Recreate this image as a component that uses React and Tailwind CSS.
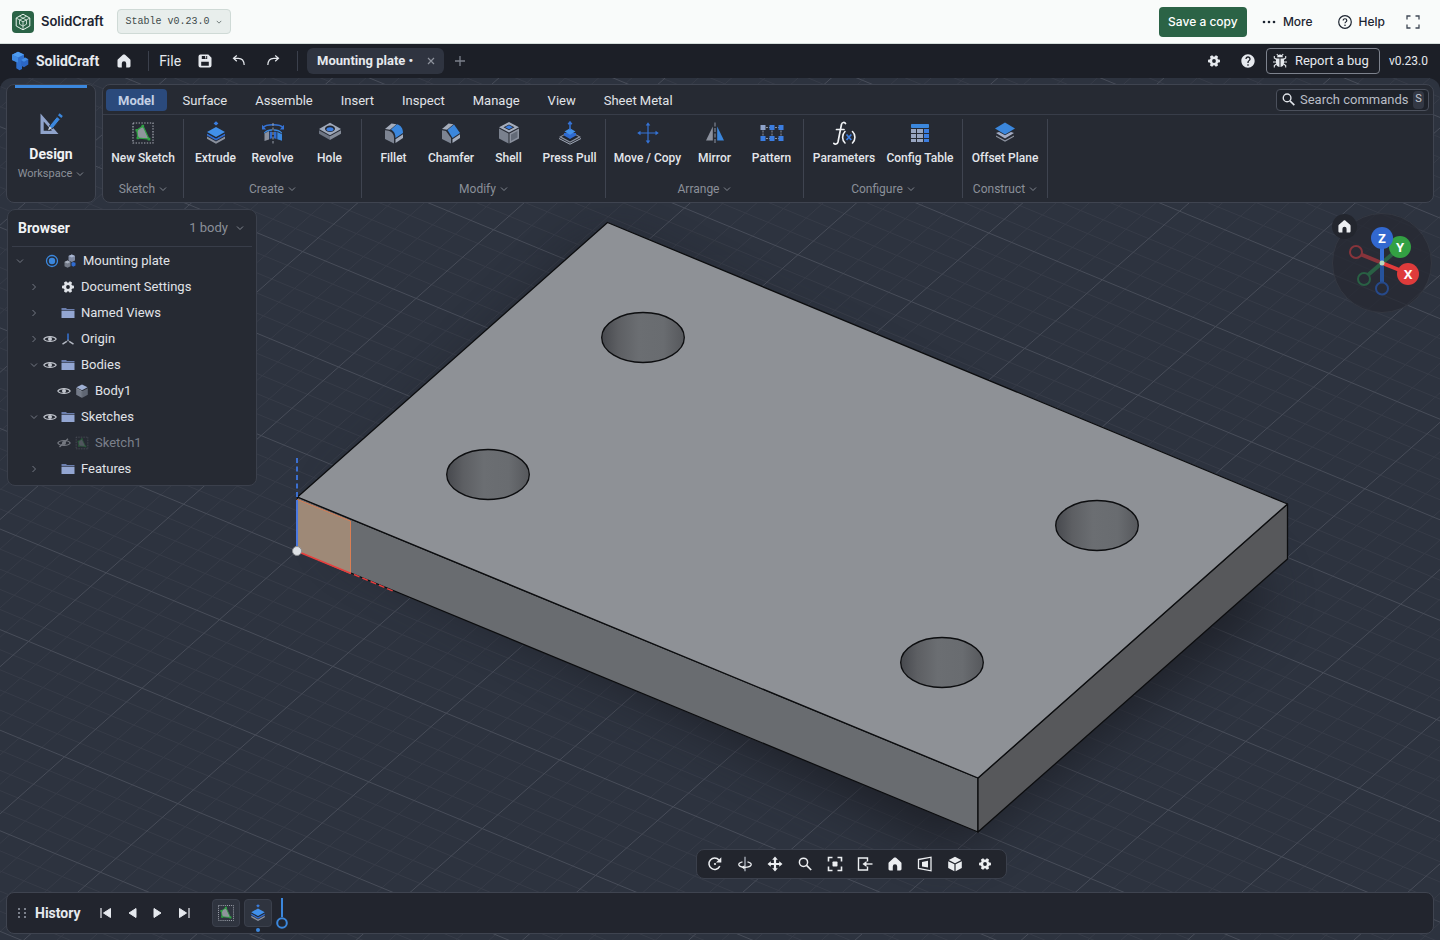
import React from "react";
import { MdHelp } from "react-icons/md";

/* ---------- icons ---------- */

function Svg({ size = 16, box = 16, className = "", children }) {
  return (
    <svg
      width={size}
      height={size}
      viewBox={`0 0 ${box} ${box}`}
      fill="none"
      aria-hidden="true"
      className={`shrink-0 ${className}`}
    >
      {children}
    </svg>
  );
}

const HomeIcon = ({ size = 16 }) => (
  <Svg size={size}>
    <path
      d="M8 1.4c-.4 0-.8.2-1.1.4L2 6.2c-.4.3-.5.7-.5 1.2V13c0 .8.6 1.4 1.4 1.4h2.9V10.5a2.2 2.2 0 0 1 4.4 0v3.9h2.9c.8 0 1.4-.6 1.4-1.4V7.4c0-.5-.2-.9-.5-1.2L9.1 1.8C8.8 1.6 8.4 1.4 8 1.4Z"
      fill="currentColor"
    />
  </Svg>
);

const GearIcon = ({ size = 16 }) => (
  <Svg size={size}>
    <g fill="currentColor">
      {[0, 60, 120].map((a) => (
        <rect key={a} x="6.5" y="2" width="3" height="12" rx="0.8" transform={`rotate(${a + 30} 8 8)`} />
      ))}
    </g>
    <circle cx="8" cy="8" r="3.1" stroke="currentColor" strokeWidth="2.6" />
    <circle cx="8" cy="8" r="1.9" fill="#1f232b" />
  </Svg>
);

const SaveIcon = () => (
  <Svg>
    <path
      fillRule="evenodd"
      d="M3.5 1.5h7.8l3.2 3.2v7.8a2 2 0 0 1-2 2h-9a2 2 0 0 1-2-2v-9a2 2 0 0 1 2-2ZM4.8 3v3h5.4V3H4.8Zm-.6 5.8v3.9h7.6V8.8H4.2Z"
      fill="currentColor"
    />
    <path d="M8.2 3h1v2.5h-1z" fill="currentColor" />
  </Svg>
);

const UndoIcon = ({ flip }) => (
  <Svg className={flip ? "-scale-x-100" : ""}>
    <path d="M5.8 2.5 2.5 5.3l3.3 2.9M2.8 5.3h4.6c3.8 0 5.6 2.3 5.8 6.7" stroke="currentColor" strokeWidth="1.2" />
  </Svg>
);

const Chevron = ({ dir = "down", size = 8 }) => (
  <Svg size={size} box={8}>
    <path d={dir === "down" ? "M1 2.5 4 5.5l3-3" : "M2.5 1 5.5 4l-3 3"} stroke="currentColor" strokeWidth="0.9" />
  </Svg>
);

const BugIcon = () => (
  <Svg>
    <path d="M5.2 4.3a2.8 2.8 0 0 1 5.6 0Z" fill="currentColor" />
    <path
      d="M4 5.5h3.5V14C5.3 13.8 4 12.2 4 9.8ZM8.5 5.5H12v4.3c0 2.4-1.3 4-3.5 4.2Z"
      fill="currentColor"
    />
    <path
      d="M4.5 6.5 2.3 5V3M11.5 6.5 13.7 5V3M1 9h3.5M11.5 9H15M4.5 11 2.3 12.5V14.5M11.5 11l2.2 1.5v2M6 2.5 4.8 1M10 2.5 11.2 1"
      stroke="currentColor"
      strokeWidth="1.1"
    />
  </Svg>
);

const SearchIcon = ({ size = 16 }) => (
  <Svg size={size}>
    <circle cx="6.5" cy="6.3" r="4.1" stroke="currentColor" strokeWidth="1.5" />
    <path d="m9.6 9.4 4.6 4.6" stroke="currentColor" strokeWidth="1.7" />
  </Svg>
);

const BrandGreen = () => (
  <Svg size={22} box={22}>
    <rect width="22" height="22" rx="4" fill="#2b6346" />
    <g stroke="#e8f3ec" strokeWidth="1" strokeLinejoin="round">
      <path d="M11 3.2 17.8 7v8L11 18.8 4.2 15V7Z" />
      <path d="M4.2 7 11 10.8 17.8 7M11 10.8v8M7.5 5.2l7 4v4M14.5 5.2l-7 4v4l3.5 2 3.5-2" strokeWidth="0.8" />
    </g>
  </Svg>
);

const BrandBlue = () => (
  <Svg size={20} box={20} className="-ml-0.5 mr-0.5">
    <path d="M8 .8 14 3.6v3.8l-2 1.2v9.4l-2.500 1.300-3.200-2V11L2 9V3.800Z" fill="#2f6fcd" />
    <path d="m8 .8 6 2.8-6 3-6-2.800Z" fill="#4f9cf0" />
    <path d="m15 6.500 3.300 1.700v5.300L14 16.200l-3-1.600V9Z" fill="#2b66c4" />
    <path d="m15 6.500 3.300 1.700L14 10.800 11 9Z" fill="#418be4" />
    <path d="M2 3.800 8 6.600v4.800L6.300 11 2 9Z" fill="#3f8ae2" />
  </Svg>
);

const DesignIcon = () => (
  <Svg size={28} box={28}>
    <path fillRule="evenodd" d="M3.5 3.5 21.5 24H3.5ZM6.7 11.5v9.3h8.2Z" fill="#8fa3cb" />
    <path d="m11 20.5 2-5.5 7-8.5 3.300 2.700-7 8.700Z" fill="#3b87dd" stroke="#262a33" strokeWidth="1" />
    <path d="m21 5.200 1.600-1.900 3.200 2.700-1.500 1.900Z" fill="#3b87dd" />
    <path d="m11 20.500 1.500-4.300 2.400 2Z" fill="#cbd3e2" />
  </Svg>
);

const SketchIcon = ({ size = 24 }) => (
  <Svg size={size} box={24}>
    <rect x="2" y="2" width="20" height="20" stroke="#a7abb5" strokeWidth="1.2" strokeDasharray="1.4 1.4" />
    <path d="M5.8 9.3 12 5 18 18 6.8 17Z" fill="#8f959c" stroke="#2fa043" strokeWidth="1.2" />
    <g fill="#2fa043">
      <path d="M4.5 8h2.6v2.6H4.5zM10.5 3.8h2.6v2.6h-2.6zM16.6 16.7h2.7v2.7h-2.7zM5.500 15.700h2.600v2.600H5.500z" />
    </g>
  </Svg>
);

const ExtrudeIcon = ({ size = 24 }) => (
  <Svg size={size} box={24}>
    <path d="m12 .2 2.400 2.200L12 4.600 9.600 2.400Z" fill="#3b7de0" />
    <path d="m3 15.500 9 5 9-5v2.300l-9 4.900-9-4.900Z" fill="#8b919e" />
    <path d="m3 12.300 9 5 9-5v2.300l-9 4.900-9-4.900Z" fill="#2f6bd0" />
    <path d="m3 11.300 9 5 9-5v1.200l-9 5-9-5Z" fill="#222731" />
    <path d="m12 6 9 5-9 5-9-5Z" fill="#4190ea" />
  </Svg>
);

const RevolveIcon = () => (
  <Svg size={24} box={24}>
    <path d="M2 6.500C5 2.800 19 2.800 22 6.500" stroke="#3573d6" strokeWidth="1.600" />
    <path d="M1 3.800v4.700h4.200ZM23 3.800v4.700h-4.200Z" fill="#3573d6" />
    <path d="M3.500 12.500 8 10v8.500l-4.500 1.500Z" fill="#8b919e" />
    <path d="M3 11.500C5 8.500 9 8 11 8.200v1.600C8 9.800 5 11 3 12.800ZM21 11.500C19 8.500 15 8 13 8.200v1.600c3 0 6 1.200 8 3Z" fill="#3b87dd" />
    <path d="M8.700 10.800H11v6.400l-2.300.8ZM13 10.800h2.500v7.200L13 17.200Z" fill="#2f6bd0" />
    <path d="m16.300 11 4.700 2.300v6.500l-4.700-1.500Z" fill="#3b87dd" />
    <path d="M12 2v20.500" stroke="#9aa0ac" strokeWidth="1" strokeDasharray="3 1.500" />
  </Svg>
);

const HoleIcon = () => (
  <Svg size={24} box={24}>
    <path d="M1 8 12 1.800 23 8 12 14.200Z" fill="#a0a9ba" />
    <path d="M1 9.300 12 15.300v3.800L1 12.800Z" fill="#6d7482" />
    <path d="M23 9.300 12 15.300v3.800L23 12.800Z" fill="#848b98" />
    <ellipse cx="12" cy="7.800" rx="5" ry="3.200" fill="#20252e" />
    <ellipse cx="12" cy="8.300" rx="3.500" ry="2" fill="#3b7de0" />
  </Svg>
);

const BlockIcon = ({ round }) => (
  <Svg size={24} box={24}>
    <path d="M3 8 9.500 2.500l5 .7L8 8.800Z" fill="#a5adbc" />
    <path d={round ? "M3 9.200C8 9 12 12 12 17v5.500L3 18Z" : "M3 9.200 7 10l5 7v5.500L3 18Z"} fill="#7d8492" />
    <path
      d={round ? "M9 8.500 15 3.300c4 1 6 4.500 6 8.700l-7.500 5c0-4-1.500-7-4.500-8.500Z" : "m8.500 9 6.500-5.500 6 8.500-7.500 5Z"}
      fill="#3b87dd"
    />
    <path d="m13.500 18.300 7.500-5V17l-7.500 5Z" fill="#a5adbc" />
  </Svg>
);

const ShellIcon = () => (
  <Svg size={24} box={24}>
    <path fillRule="evenodd" d="M12 1 22 6.200 12 11.500 2 6.200Zm0 2.400L6.500 6.300 12 9.200l5.500-2.900Z" fill="#a5adbc" />
    <path d="m12 4.300 3.800 2-3.800 2-3.800-2Z" fill="#3b7de0" />
    <path d="m2 7.600 9.500 5v10L2 17.500Z" fill="#7a818e" />
    <path d="m22 7.600-9.500 5v10l9.500-5.100Z" fill="#8b919e" />
    <path d="m20.500 10-6.500 3.500v6.500l6.500-3.500Z" fill="#636a77" />
  </Svg>
);

const PressPullIcon = () => (
  <Svg size={24} box={24}>
    <path d="M1 16 12 10l11 6-11 5.800Z" fill="#8b919e" />
    <path d="M3.500 15.800 12 11l8.500 4.800L12 20.500Z" fill="#20252e" />
    <path d="M6 12h12v2.500L12 18l-6-3.500Z" fill="#2f6bd0" />
    <path d="m6.500 10.500 5.500-3.200 5.500 3.200L12 13.700Z" fill="#4190ea" />
    <path d="M12 9V2M10.200 3.300 12 1l1.800 2.300" stroke="#3573d6" strokeWidth="1.500" />
    <path d="m1 17.500 11 5.700 11-5.700" stroke="#a5adbc" strokeWidth="1" />
  </Svg>
);

const MoveIcon = () => (
  <Svg size={24} box={24}>
    <path d="M12 3.500v17M3.500 12h17" stroke="#3573d6" strokeWidth="1.200" />
    <path d="m12 1.200 2.300 3.300H9.700ZM12 22.800l2.300-3.300H9.700ZM1.200 12l3.300-2.300v4.600ZM22.800 12l-3.300-2.300v4.600Z" fill="#3573d6" />
  </Svg>
);

const MirrorIcon = () => (
  <Svg size={24} box={24}>
    <path d="M12 1.500v21" stroke="#7d8492" strokeWidth="1.200" strokeDasharray="4 1.500" />
    <path d="M9.800 5.500v14H3Z" fill="#8b919e" />
    <path d="M14.200 5.500v14H21Z" fill="#3b87dd" />
  </Svg>
);

const PatternIcon = () => (
  <Svg size={24} box={24}>
    <path d="M3 6.500h18M3 17.500h18M3 6.500v11M12 6.500v11M21 6.500v11" stroke="#8b919e" strokeWidth="1" strokeDasharray="2 1" />
    <path d="M.5 4h5v5h-5z" fill="#8fa3cb" />
    <path d="M9.500 4h5v5h-5zM18.500 4h5v5h-5zM.5 15h5v5h-5zM9.500 15h5v5h-5zM18.500 15h5v5h-5z" fill="#3b7de0" />
  </Svg>
);

const ParamsIcon = () => (
  <Svg size={26} box={26}>
    <path
      d="M14.500 3.500c-.8-1.500-3.300-1.500-4 .8L7 22c-.6 2.300-3 2.600-4.200 1.400M5.500 9.500h7.500"
      stroke="#f0f2f5"
      strokeWidth="1.700"
      strokeLinecap="round"
    />
    <path d="M14 11.500c-3.200 3-3.200 8.500 0 11.500M21.500 11.500c3.200 3 3.200 8.500 0 11.500" stroke="#f0f2f5" strokeWidth="1.600" strokeLinecap="round" />
    <path d="m15.500 14.500 4.800 5.500m0-5.500-4.800 5.500" stroke="#3b7de0" strokeWidth="1.700" />
  </Svg>
);

const TableIcon = () => (
  <Svg size={24} box={24}>
    <rect x="3" y="3" width="18" height="4" rx="0.8" fill="#3b87dd" />
    <path d="M3 8h5v4H3zM9 8h6v4H9zM3 13h5v4H3zM9 13h6v4H9zM3 18h5v3H3zM9 18h6v3H9z" fill="#98a5c0" />
    <path d="M16 8h5v4h-5zM16 13h5v4h-5zM16 18h5v3h-5z" fill="#3b7de0" />
  </Svg>
);

const PlaneIcon = () => (
  <Svg size={24} box={24}>
    <path d="m3 14.500 9 4.800 9-4.800v1.200l-9 5.100-9-5.100Z" fill="#8b919e" />
    <path d="m3 12 3-1 6 3.300 6-3.300 3 1-9 5.500Z" fill="#a5adc4" />
    <path d="M12 1.500 22 7.500l-10 6-10-6Z" fill="#3b87dd" />
  </Svg>
);

const FolderIcon = () => (
  <Svg>
    <path d="M1.500 3h4.500l1 1h7.500v1.300h-13Z" fill="#6c7fae" />
    <path d="M1.500 5.800h13v7.200h-13Z" fill="#93a6d2" />
  </Svg>
);

const EyeIcon = ({ off }) => (
  <Svg>
    <path d="M1.800 8C4 4.700 12 4.700 14.200 8 12 11.300 4 11.300 1.800 8Z" stroke="currentColor" strokeWidth="1.200" />
    <circle cx="8" cy="8" r="2" fill="currentColor" />
    {off && <path d="M3.500 12 12 3.800" stroke="currentColor" strokeWidth="1.300" />}
  </Svg>
);

const OriginIcon = () => (
  <Svg>
    <path d="M8 9V2.500" stroke="#3573d6" strokeWidth="1.500" />
    <path d="m6.800 10.300-4.300 2.900M9.200 10.300l4.300 2.900" stroke="#b4b9c3" strokeWidth="1.400" />
    <circle cx="8" cy="9.500" r="1" fill="#8b919e" />
  </Svg>
);

const CubeIcon = () => (
  <Svg>
    <path d="m8 1.500 5.500 2.800L8 7.200 2.500 4.300Z" fill="#9fb0d4" />
    <path d="m2.200 5.200 5.400 2.800v6.700l-5.400-3Z" fill="#737a88" />
    <path d="M13.800 5.200 8.400 8v6.700l5.400-3Z" fill="#5f6673" />
    <path d="m2.200 5.200 5.400 2.800M8 8v6.500" stroke="#98a0ae" strokeWidth="0.700" />
  </Svg>
);

const AssemblyIcon = () => (
  <Svg>
    <path d="m6.500 3 3.300-1.500L13 3v4.500L9.800 9 6.500 7.500Z" fill="#7f8aa3" />
    <path d="m6.500 3 3.300-1.500L13 3 9.800 4.500Z" fill="#a9b6d2" />
    <path d="m2.500 9 3-1.400 3 1.400v4.300l-3 1.500-3-1.500Z" fill="#757c8a" />
    <path d="m2.500 9 3-1.400 3 1.400-3 1.400Z" fill="#a9b1bf" />
    <path d="m9.500 9.800 1.500-.8 2.500.8v2.700l-2.300 1.200-1.700-1.200Z" fill="#2f6bd0" />
  </Svg>
);

const ActiveIcon = () => (
  <Svg>
    <circle cx="8" cy="8" r="5.500" stroke="#3b87dd" strokeWidth="1.300" />
    <circle cx="8" cy="8" r="3.200" fill="#3b87dd" />
  </Svg>
);

/* ---------- top bars ---------- */

function HostHeader() {
  return (
    <header className="flex h-11 items-center justify-between border-b border-[#d5dedb] bg-[#f9fbfa] px-3 font-['Inter',sans-serif] text-[#1c2430]">
      <div className="flex items-center gap-[7px]">
        <BrandGreen />
        <span className="text-[13px] font-semibold">SolidCraft</span>
        <button className="ml-1.5 flex h-[25px] items-center gap-1.5 rounded border border-[#cfdad6] bg-[#e8eeec] px-2 font-['Liberation_Mono',monospace] text-[10px] text-[#3d4a4a]">
          <span>Stable v0.23.0</span>
          <Chevron size={6} />
        </button>
      </div>
      <div className="flex items-center text-xs font-medium">
        <button className="h-[30px] w-[88px] rounded bg-[#2b6346] text-white">Save a copy</button>
        <button className="ml-3.5 flex items-center gap-1.5">
          <Svg>
            <g fill="currentColor">
              <circle cx="3" cy="8" r="1.300" />
              <circle cx="8" cy="8" r="1.300" />
              <circle cx="13" cy="8" r="1.300" />
            </g>
          </Svg>
          More
        </button>
        <button className="ml-6 flex items-center gap-1.5">
          <Svg>
            <circle cx="8" cy="8" r="6.300" stroke="currentColor" strokeWidth="1.200" />
            <path d="M6.200 6.500c0-2.400 3.600-2.300 3.600 0 0 1.300-1.800 1.400-1.800 2.700" stroke="currentColor" strokeWidth="1.200" />
            <circle cx="8" cy="11.200" r="0.800" fill="currentColor" />
          </Svg>
          Help
        </button>
        <button aria-label="Full screen" className="mr-[7px] ml-5 text-[#3f4855]">
          <Svg>
            <path d="M2 5.500V2h3.500M10.500 2H14v3.500M14 10.500V14h-3.500M5.500 14H2v-3.500" stroke="currentColor" strokeWidth="1.300" />
          </Svg>
        </button>
      </div>
    </header>
  );
}

function AppBar() {
  return (
    <div className="flex h-[34px] items-center justify-between bg-[#1c1f27] px-3 text-[13px] text-[#e6e9ee]">
      <div className="flex items-center">
        <BrandBlue />
        <span className="ml-1 text-sm font-bold">SolidCraft</span>
        <button aria-label="Home" className="ml-[17px]"><HomeIcon /></button>
        <div className="ml-4 h-5 w-px bg-[#3b404c]" />
        <button className="ml-2.5 text-sm">File</button>
        <button aria-label="Save" className="ml-4"><SaveIcon /></button>
        <button aria-label="Undo" className="ml-[18px]"><UndoIcon /></button>
        <button aria-label="Redo" className="ml-[18px]"><UndoIcon flip /></button>
        <div className="ml-4 h-5 w-px bg-[#3b404c]" />
        <div className="ml-[9px] flex h-[26px] w-[137px] items-center justify-between rounded-md bg-[#2f3440] px-2.5 font-bold">
          <span>Mounting plate •</span>
          <button aria-label="Close tab" className="-mr-1 text-[#8d929c]">
            <Svg size={14} box={14}><path d="m4 4 6 6m0-6-6 6" stroke="currentColor" strokeWidth="1.200" /></Svg>
          </button>
        </div>
        <button aria-label="New tab" className="ml-2 text-[#7b808b]">
          <Svg><path d="M8 3v10M3 8h10" stroke="currentColor" strokeWidth="1.300" /></Svg>
        </button>
      </div>
      <div className="flex items-center">
        <button aria-label="Settings"><GearIcon /></button>
        <button aria-label="Help" className="ml-[18px]"><MdHelp size={16} /></button>
        <button className="ml-2.5 flex h-[26px] w-[114px] items-center gap-[7px] rounded border border-[#7d828d] px-[5px]">
          <BugIcon />
          Report a bug
        </button>
        <span className="ml-[9px] text-xs">v0.23.0</span>
      </div>
    </div>
  );
}

/* ---------- ribbon ---------- */

const TABS = ["Model", "Surface", "Assemble", "Insert", "Inspect", "Manage", "View", "Sheet Metal"];

const GROUPS = [
  { name: "Sketch", tools: [["New Sketch", <SketchIcon />, "w-[70px]"]] },
  {
    name: "Create",
    tools: [
      ["Extrude", <ExtrudeIcon />, "w-[53px]"],
      ["Revolve", <RevolveIcon />, "w-[53px]"],
      ["Hole", <HoleIcon />, "w-[53px]"],
    ],
  },
  {
    name: "Modify",
    tools: [
      ["Fillet", <BlockIcon round />, "w-[53px]"],
      ["Chamfer", <BlockIcon />, "w-[54px]"],
      ["Shell", <ShellIcon />, "w-[53px]"],
      ["Press Pull", <PressPullIcon />, "w-[61px]"],
    ],
  },
  {
    name: "Arrange",
    tools: [
      ["Move / Copy", <MoveIcon />, "w-[73px]"],
      ["Mirror", <MirrorIcon />, "w-[53px]"],
      ["Pattern", <PatternIcon />, "w-[53px]"],
    ],
  },
  {
    name: "Configure",
    tools: [
      ["Parameters", <ParamsIcon />, "w-[70px]"],
      ["Config Table", <TableIcon />, "w-[74px]"],
    ],
  },
  { name: "Construct", tools: [["Offset Plane", <PlaneIcon />, "w-[74px]"]] },
];

function Ribbon() {
  return (
    <div className="flex gap-1.5 px-1.5 pt-1.5">
      <button className="relative flex w-[90px] shrink-0 flex-col items-center rounded-lg border border-[#3f4450] bg-[#262a33] pt-[25px]">
        <span className="absolute top-0 left-2 h-[3px] w-[72px] bg-[#3b87dd]" />
        <DesignIcon />
        <span className="mt-1.5 text-sm leading-5 font-bold text-[#f0f2f5]">Design</span>
        <span className="flex items-center gap-1 text-[11px] leading-5 text-[#8b9099]">
          Workspace <Chevron />
        </span>
      </button>
      <section className="min-w-0 flex-1 rounded-lg border border-[#3f4450] bg-[#262a33]">
        <div className="flex h-[30px] items-center justify-between border-b border-[#383d49] pr-1 pl-[3px]">
          <nav className="flex gap-1 text-[13px] text-[#e0e3e8]">
            {TABS.map((t, i) => (
              <button
                key={t}
                className={
                  i === 0
                    ? "h-[22px] rounded bg-[#2b4a7c] px-3 pt-0.5 font-bold text-[#c3cfe4]"
                    : "h-[22px] px-3 pt-0.5"
                }
              >
                {t}
              </button>
            ))}
          </nav>
          <label className="flex h-[22px] w-[153px] items-center gap-1 rounded border border-[#4b505c] bg-[#1e222a] pr-1 pl-1 text-[#e0e3e8]">
            <SearchIcon size={15} />
            <input
              aria-label="Search commands"
              placeholder="Search commands"
              className="min-w-0 flex-1 bg-transparent pt-px text-[13px] outline-none placeholder:text-[#b9bdc6]"
            />
            <kbd className="flex h-[18px] w-[11px] items-center justify-center rounded-sm bg-[#333844] font-[Roboto,sans-serif] text-[11px] text-[#c5c9d1]">
              S
            </kbd>
          </label>
        </div>
        <div className="flex h-[87px] pt-1 pb-1">
          {GROUPS.map((g) => (
            <div key={g.name} className="flex flex-col items-center justify-between border-r border-[#3f4450] px-[5px]">
              <div className="flex gap-1">
                {g.tools.map(([label, icon, w]) => (
                  <button
                    key={label}
                    className={`${w} flex flex-col items-center text-xs font-medium whitespace-nowrap text-[#e3e6eb]`}
                  >
                    <span className="flex h-7 items-center">{icon}</span>
                    <span className="leading-[22px]">{label}</span>
                  </button>
                ))}
              </div>
              <button className="flex items-center gap-1 text-xs leading-[18px] text-[#8b9099]">
                {g.name} <Chevron />
              </button>
            </div>
          ))}
        </div>
      </section>
    </div>
  );
}

/* ---------- browser tree ---------- */

const ROWS = [
  { label: "Mounting plate", arrow: "down", indent: "pl-2", state: <ActiveIcon />, icon: <AssemblyIcon />, gap: "ml-5" },
  { label: "Document Settings", arrow: "right", indent: "pl-[22px]", icon: <GearIcon /> },
  { label: "Named Views", arrow: "right", indent: "pl-[22px]", icon: <FolderIcon /> },
  { label: "Origin", arrow: "right", indent: "pl-[22px]", state: <EyeIcon />, icon: <OriginIcon /> },
  { label: "Bodies", arrow: "down", indent: "pl-[22px]", state: <EyeIcon />, icon: <FolderIcon /> },
  { label: "Body1", indent: "pl-9", state: <EyeIcon />, icon: <CubeIcon /> },
  { label: "Sketches", arrow: "down", indent: "pl-[22px]", state: <EyeIcon />, icon: <FolderIcon /> },
  { label: "Sketch1", indent: "pl-9", state: <EyeIcon off />, icon: <SketchIcon size={14} />, dim: true },
  { label: "Features", arrow: "right", indent: "pl-[22px]", icon: <FolderIcon /> },
];

function Browser() {
  return (
    <aside className="mt-1.5 ml-[7px] w-[250px] self-start rounded-lg border border-[#3b404c] bg-[#262a33] px-1 pb-[3px] text-[#e0e3e8]">
      <div className="flex h-[37px] items-center justify-between border-b border-[#383d49] pr-2 pb-px pl-1.5">
        <h2 className="text-sm font-bold text-[#f0f2f5]">Browser</h2>
        <button className="flex items-center gap-2 text-[13px] text-[#8b9099]">
          1 body <Chevron />
        </button>
      </div>
      <ul className="pt-px text-[13px]">
        {ROWS.map((r) => (
          <li key={r.label} className={`${r.indent} -ml-1 flex h-[26px] items-center`}>
            <span className="flex w-2 shrink-0 text-[#7b808b]">{r.arrow && <Chevron dir={r.arrow} />}</span>
            <span className={`${r.gap || "ml-1"} flex w-4 shrink-0 text-[#c3c7cf] ${r.dim ? "opacity-50" : ""}`}>
              {r.state}
            </span>
            <span className={`ml-0.5 flex w-4 shrink-0 justify-center ${r.dim ? "opacity-40" : ""}`}>{r.icon}</span>
            <span className={`ml-[5px] ${r.dim ? "text-[#7b808b]" : ""}`}>{r.label}</span>
          </li>
        ))}
      </ul>
    </aside>
  );
}

/* ---------- 3D viewport ---------- */

const ORIGIN = [297, 551];
const U = [113.4, 46.8];
const V = [77.5, -68.6];

const at = (a, b) => `${(ORIGIN[0] + a * U[0] + b * V[0]).toFixed(1)} ${(ORIGIN[1] + a * U[1] + b * V[1]).toFixed(1)}`;

function gridPath(major) {
  let d = "";
  for (let i = -60; i <= 70; i++) {
    if ((i % 5 === 0) !== major) continue;
    const t = i / 5;
    d += `M${at(-12, t)}L${at(14, t)}M${at(t, -12)}L${at(t, 14)}`;
  }
  return d;
}

const MINOR = gridPath(false);
const MAJOR = gridPath(true);
const HOLES = [[643, 337.5], [488, 474.5], [1097, 525.5], [942, 662.5]];

function Scene() {
  return (
    <svg
      className="absolute inset-0 h-full w-full"
      viewBox="0 78 1440 862"
      preserveAspectRatio="xMidYMid slice"
      fill="none"
      role="img"
      aria-label="Mounting plate model"
    >
      <defs>
        <linearGradient id="bore">
          <stop offset="0" stopColor="#47494e" />
          <stop offset="0.2" stopColor="#5d5f63" />
          <stop offset="0.45" stopColor="#6b6e72" />
          <stop offset="0.75" stopColor="#696c70" />
          <stop offset="1" stopColor="#56585c" />
        </linearGradient>
        <filter id="soft" x="-20%" y="-20%" width="140%" height="140%" colorInterpolationFilters="sRGB">
          <feGaussianBlur stdDeviation="26" />
        </filter>
      </defs>
      <path d={MINOR} stroke="#373c48" strokeWidth="1" />
      <path d={MAJOR} stroke="#484d59" strokeWidth="1" />
      <path d="M370 520 950 815 1235 595 610 275Z" fill="#1b1d24" opacity="0.850" filter="url(#soft)" stroke="#1b1d24" strokeWidth="56" strokeLinejoin="round" />
      <g stroke="#0c0d0f" strokeWidth="1.300" strokeLinejoin="round">
        <path d="M297.500 497 978 778v54L297.500 551Z" fill="#696c70" />
        <path d="M978 778 1287.500 504v55L978 832Z" fill="#57585b" />
        <path d="M297.500 497 607.500 222.500 1287.500 504 978 778Z" fill="#8e9196" />
        {HOLES.map(([x, y]) => (
          <ellipse key={x} cx={x} cy={y} rx="41.300" ry="25" fill="url(#bore)" />
        ))}
      </g>
      <path d="M297.500 499.500 350.500 521v52.500L297.500 551Z" fill="#9e8977" stroke="#d97f55" strokeWidth="1" />
      <path d="M297 458v40" stroke="#3b6fd0" strokeWidth="2" strokeDasharray="5 3.500" />
      <path d="M297 500v48" stroke="#4a78e0" strokeWidth="2" />
      <path d="m300 552.500 51 21" stroke="#e53e3e" strokeWidth="1.500" />
      <path d="m354 574.500 40 17" stroke="#e53e3e" strokeWidth="1.500" strokeDasharray="6 3" />
      <circle cx="297" cy="551" r="4.500" fill="#dfe2e6" stroke="#8a8d92" strokeWidth="1" />
    </svg>
  );
}

function ViewGizmo() {
  return (
    <div className="relative mt-[10px] mr-2 h-[100px] w-[100px]">
      <svg width="100" height="100" viewBox="0 0 100 100" fill="none" role="img" aria-label="View orientation">
        <circle cx="50" cy="50" r="49.500" fill="#272a33" fillOpacity="0.750" stroke="#343842" />
        <g strokeWidth="4">
          <path d="M50 50 29 41.500" stroke="#87343b" />
          <path d="M50 50 36 62" stroke="#296044" />
          <path d="M50 50v19" stroke="#26539c" />
          <path d="M50 50 64 38" stroke="#296044" />
          <path d="M50 50v-20" stroke="#366fd6" />
          <path d="M50 50l20 8" stroke="#e23b3b" />
        </g>
        <g strokeWidth="2">
          <circle cx="24" cy="39" r="6" stroke="#87343b" />
          <circle cx="32" cy="66" r="6" stroke="#296044" />
          <circle cx="50" cy="75.500" r="6" stroke="#26498a" />
        </g>
        <circle cx="50" cy="50" r="2.500" fill="#b9d8be" />
        <circle cx="68" cy="34" r="11" fill="#33a043" />
        <circle cx="50" cy="25" r="11" fill="#3268cf" />
        <circle cx="76" cy="61" r="11" fill="#de3b3b" />
        <g fill="#fff" fontFamily="Noto Sans, sans-serif" fontWeight="700" fontSize="13" textAnchor="middle">
          <text x="50" y="29.500">Z</text>
          <text x="68" y="38.500">Y</text>
          <text x="76" y="65.500">X</text>
        </g>
      </svg>
      <button
        aria-label="Home view"
        className="absolute top-px left-0 flex h-[25px] w-[25px] items-center justify-center rounded-full bg-[#23262e] text-[#eceef1]"
      >
        <HomeIcon size={15} />
      </button>
    </div>
  );
}

const VIEW_TOOLS = [
  ["Orbit", <Svg><path d="M12.800 10.200A5.700 5.700 0 1 1 12 4" stroke="currentColor" strokeWidth="1.500" /><path d="M14.300 1.200v5.200H9Z" fill="currentColor" /><circle cx="8" cy="8" r="1.100" fill="currentColor" /></Svg>],
  ["Turntable", <Svg><path d="M8 .8v14.400" stroke="#9da2ac" strokeWidth="1.500" /><path d="M5.500 5.800C-.5 7.200 1 11.300 8 11.300s8.500-4.100 2.500-5.500" stroke="currentColor" strokeWidth="1.300" /><path d="M7.500 9.200v4.200l-3-2.100Z" fill="currentColor" /></Svg>],
  ["Pan", <Svg><path d="M8 3v10M3 8h10" stroke="currentColor" strokeWidth="2.200" /><path d="m8 .5 2.800 3.300H5.200ZM8 15.500l2.800-3.300H5.200ZM.5 8l3.300-2.800v5.600ZM15.500 8l-3.300-2.800v5.600Z" fill="currentColor" /></Svg>],
  ["Zoom", <SearchIcon />],
  ["Fit", <Svg><path d="M1.500 5.500v-4h4M10.500 1.500h4v4M14.500 10.500v4h-4M5.500 14.500h-4v-4" stroke="currentColor" strokeWidth="1.600" /><rect x="5.500" y="5.500" width="5" height="5" rx="0.800" fill="currentColor" /></Svg>],
  ["Look at", <Svg><path d="M10.500 5.500V2h-9v12h9v-3.500" stroke="currentColor" strokeWidth="1.400" /><path d="M8 8h7.500" stroke="currentColor" strokeWidth="1.400" /><path d="M5.500 8 9.500 5v6Z" fill="currentColor" /></Svg>],
  ["Home", <HomeIcon />],
  ["Perspective", <Svg><path d="M1.500 3.500 14 1.200v13.600L1.500 12.500Z" stroke="currentColor" strokeWidth="1.300" /><path d="m5 6 6-1.200v6.600L5 10.500Z" fill="currentColor" /></Svg>],
  ["Display style", <Svg><path d="m8 .8 6.200 3.300L8 7.200 1.800 4.100Z" fill="currentColor" /><path d="m1.200 5.200 6.200 3.100v7L1.200 12ZM14.800 5.200 8.600 8.300v7l6.200-3.300Z" fill="currentColor" /></Svg>],
  ["View settings", <GearIcon />],
];

function ViewToolbar() {
  return (
    <div className="mb-[13px] flex justify-center pl-[262px]">
      <div className="flex h-[30px] rounded-lg border border-[#3b404c] bg-[#22252d] pr-1.5 pl-[3px] text-[#eceef1]">
        {VIEW_TOOLS.map(([label, icon]) => (
          <button key={label} aria-label={label} className="flex w-[30px] items-center justify-center">
            {icon}
          </button>
        ))}
      </div>
    </div>
  );
}

/* ---------- history ---------- */

const PLAYBACK = [
  ["First", "M3 3v10", "M12.500 3.500 5.500 8l7 4.500Z"],
  ["Back", "", "M12 3.500 5 8l7 4.500Z"],
  ["Play", "", "M4 3.500 11 8l-7 4.500Z"],
  ["Last", "M13 3v10", "M3.500 3.500 10.500 8l-7 4.500Z"],
];

function History() {
  return (
    <footer className="mx-1.5 mb-1.5 flex h-[42px] items-center rounded-lg border border-[#3f4450] bg-[#22252e] pl-[9px] text-[#e6e9ee]">
      <Svg size={12} box={12}>
        <g fill="#7b808b">
          {[1, 5, 9].map((y) => (
            <React.Fragment key={y}>
              <rect x="2" y={y} width="2" height="2" />
              <rect x="8" y={y} width="2" height="2" />
            </React.Fragment>
          ))}
        </g>
      </Svg>
      <h2 className="ml-[7px] w-12 text-sm font-bold">History</h2>
      <div className="ml-[15px] flex gap-2.5">
        {PLAYBACK.map(([label, bar, arrow]) => (
          <button key={label} aria-label={label}>
            <Svg>
              {bar && <path d={bar} stroke="currentColor" strokeWidth="1.500" opacity="0.800" />}
              <path d={arrow} fill="currentColor" stroke="currentColor" strokeWidth="1" strokeLinejoin="round" />
            </Svg>
          </button>
        ))}
      </div>
      <div className="ml-5 flex gap-1">
        <button aria-label="Sketch1" className="flex h-7 w-7 items-center justify-center rounded border border-[#3b404c] bg-[#2f343f]">
          <SketchIcon size={18} />
        </button>
        <button aria-label="Extrude1" className="relative flex h-7 w-7 items-center justify-center rounded border border-[#3b404c] bg-[#2f343f]">
          <ExtrudeIcon size={18} />
          <span className="absolute -bottom-[6px] left-[11px] h-1 w-1 rounded-full bg-[#3b87dd]" />
        </button>
      </div>
      <svg width="12" height="32" viewBox="0 0 12 32" fill="none" className="ml-1" role="img" aria-label="Timeline marker">
        <path d="M6 1v19" stroke="#3b87dd" strokeWidth="2" />
        <circle cx="6" cy="26" r="4.800" stroke="#3b87dd" strokeWidth="2" />
      </svg>
    </footer>
  );
}

export default function App() {
  return (
    <div className="flex min-h-screen flex-col bg-[#1c1f27] font-[Roboto,sans-serif]">
      <HostHeader />
      <AppBar />
      <main className="relative isolate flex flex-1 flex-col overflow-hidden rounded-t-xl bg-[#2d333f]">
        <div className="absolute inset-0 -z-10">
          <Scene />
        </div>
        <Ribbon />
        <div className="flex flex-1 items-start justify-between">
          <Browser />
          <ViewGizmo />
        </div>
        <ViewToolbar />
        <History />
      </main>
    </div>
  );
}
